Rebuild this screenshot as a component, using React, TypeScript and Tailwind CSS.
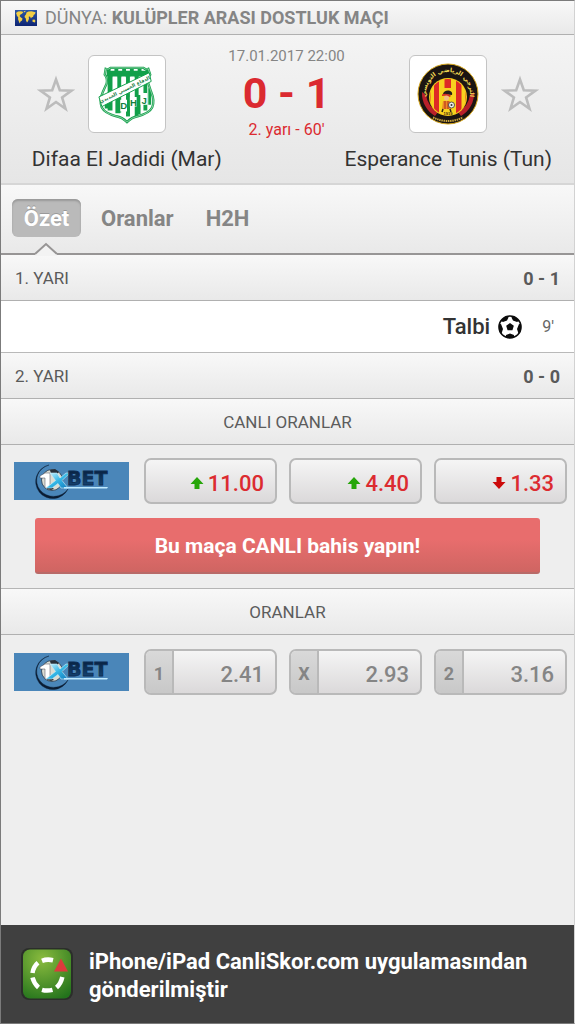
import type { ReactNode } from "react";

const bar = "bg-linear-to-b from-[#f8f8f8] to-[#e9e9e9]";

function WorldFlag() {
  return (
    <svg viewBox="0 0 22 16" className="h-4 w-[22px] shrink-0" aria-hidden="true">
      <defs>
        <linearGradient id="sea" x1="0" y1="0" x2="0" y2="1">
          <stop offset="0" stopColor="#2c57a6" />
          <stop offset="1" stopColor="#0d2473" />
        </linearGradient>
      </defs>
      <rect width="22" height="16" fill="url(#sea)" />
      <path
        fill="#f2cf45"
        d="M1 3l2-1.500 3-.3 2.500.8-1.500 1.800-1.500.7-1 1.500 1.500 1.500 1.500 1-.5 2-1.500 1-.8 2-1-2.500-.7-2 .3-1.500-1.500-2L1.500 4zM8.500 1.200l2.200-.4-.8 1.800zM11 4.500l.5-2 2-1 3-.3 4 1-.5 1.800-1.300 1-.7 2-1.200.3-.8 1.200-1-2-1.300.2.3 2-1 2.500-1 1.300-1-2-.2-2-1.300-1.500.5-1.500zM17.500 9.800l2-.3 1 1.500-.8 1.500-2.200-.7z"
      />
    </svg>
  );
}

function Star() {
  return (
    <svg viewBox="0 0 38 38" className="h-[38px] w-[38px]" aria-hidden="true">
      <path
        d="M19 4.500l3.800 10.800 11.700.3-9.400 6.900 3.400 11.200-9.500-6.700-9.500 6.700 3.400-11.200-9.400-6.900 11.700-.3z"
        fill="none"
        stroke="#bcbcbc"
        strokeWidth="2.600"
      />
    </svg>
  );
}

function JadidiCrest() {
  const shield =
    "M8 5q3 1 5-1h34q2 2 5 1l2 6q-3 3-2 9l3 9q4 9 1 16-3 6-15 9-6 1-11 6-5-5-11-6-12-3-15-9-3-7 1-16l4-9q1-6-2-9z";
  return (
    <svg viewBox="0 0 60 62" className="h-[60px] w-[60px]" role="img" aria-label="Difaa El Jadidi">
      <defs>
        <clipPath id="shield">
          <path d={shield} />
        </clipPath>
      </defs>
      <path d={shield} fill="#fff" />
      <g clipPath="url(#shield)">
        <g fill="#12a04a">
          <path d="M9 5h4v2h4V5h4v2h4V5h4v2h4V5h4v2h4V5h4v2h4V5h4v8H9z" />
          <path d="M10 10h5v38h-5zM20 10h4v40h-4zM29 10h4v44h-4zM38 10h4v44h-4zM47 10h4v38h-4zM7 34h4v12H7z" />
          <path d="M15 15q0-4 2.500-4T20 15v-5h-5zM24 15q0-4 2.500-4T29 15v-5h-5zM33 15q0-4 2.500-4T38 15v-5h-5zM42 15q0-4 2.500-4T47 15v-5h-5z" />
          <path d="M18 35h5v16h-5zM29 38h4v16h-4zM40 32h4v20h-4zM52 25h3v17h-3z" />
        </g>
      </g>
      <path d="M23 37h7v12h-7zM33 34h7v10h-7zM44 30h7v12h-7z" fill="#fff" />
      <g fill="#12803f" fontFamily="'Liberation Sans', sans-serif" fontWeight="700" fontSize="10">
        <text x="23" y="47">D</text>
        <text x="33" y="43">H</text>
        <text x="45" y="41">J</text>
      </g>
      <path d={shield} fill="none" stroke="#12a04a" strokeWidth="2.400" />
      <path d={shield} fill="none" stroke="#d8f0e0" strokeWidth=".6" />
      <path d="M1 34L53 9l2 9L4 44z" fill="#fff" stroke="#12a04a" strokeWidth="1" />
      <text
        x="28"
        y="28"
        transform="rotate(-26 28 27)"
        textAnchor="middle"
        fill="#127a3e"
        fontFamily="'DejaVu Sans', sans-serif"
        fontWeight="700"
        fontSize="5"
      >
        الدفاع الحسني الجديدي
      </text>
    </svg>
  );
}

function EsperanceCrest() {
  return (
    <svg viewBox="0 0 62 62" className="h-[62px] w-[62px]" role="img" aria-label="Esperance Tunis">
      <defs>
        <clipPath id="disc">
          <circle cx="31" cy="34" r="18" />
        </clipPath>
        <path id="arc" d="M10.300 38.500A22 22 0 1 1 51.700 38.500" />
      </defs>
      <circle cx="31" cy="31" r="30" fill="#1b1512" stroke="#d8a81d" strokeWidth="1" />
      <path d="M5 29A26 26 0 0 0 18 53l3-4A23 23 0 0 1 9 32zM57 29A26 26 0 0 1 44 53l-3-4a23 23 0 0 0 12-17z" fill="#b8202a" />
      <circle cx="31" cy="34" r="19" fill="#f6c91c" />
      <g clipPath="url(#disc)">
        <rect x="12" y="14" width="38" height="40" fill="#f7d21f" />
        <path fill="#de2a26" d="M17 14h5v40h-5zM27.500 14h6.500v11h-6.500zM39 14h5.500v40H39zM12 14h1.500v40H12zM48.500 14H50v40h-1.500z" />
      </g>
      <path d="M26 31q1-4 6-3.500 4 1 3 4.500z" fill="#251b19" />
      <path d="M25 31.500q4-2 9 1l-1 1.500q-4-2-8-1z" fill="#d52b27" />
      <circle cx="29.500" cy="35" r="2.500" fill="#f3bc86" />
      <path d="M26 38h7l1 8h-9z" fill="#ec8b24" />
      <path d="M28 38v8M31 38v8" stroke="#b32b20" strokeWidth="1" />
      <path d="M26 46l-1 3M33 46l1 3" stroke="#2b211c" strokeWidth="1.500" />
      <circle cx="34.500" cy="42" r="3" fill="#eee" stroke="#333" strokeWidth=".8" />
      <circle cx="34.500" cy="42" r="1" fill="#333" />
      <text fill="#f3dc55" fontFamily="'DejaVu Sans', sans-serif" fontWeight="700" fontSize="6">
        <textPath href="#arc" startOffset="50%" textAnchor="middle">
          الترجي الرياضي التونسي
        </textPath>
      </text>
      <path d="M16 54.500q15 7 30 0" fill="none" stroke="#c9a53c" strokeWidth="2" strokeDasharray="1.500 .7" />
      <text x="31" y="52" textAnchor="middle" fill="#3a2410" fontFamily="'Liberation Sans', sans-serif" fontWeight="700" fontSize="4">
        1919
      </text>
    </svg>
  );
}

function Ball() {
  return (
    <svg viewBox="0 0 24 24" className="h-6 w-6 shrink-0" role="img" aria-label="Gol">
      <defs>
        <clipPath id="ball">
          <circle cx="12" cy="12" r="11" />
        </clipPath>
      </defs>
      <circle cx="12" cy="12" r="11" fill="#fff" />
      <g clipPath="url(#ball)" fill="#0b0b0b">
        <path d="M12 8l3.800 2.800-1.400 4.500H9.600l-1.400-4.500z" />
        <path d="M4 3l5-2.500 1.500 2L9 5.500 5 7 3 6zM20 3l-5-2.500-1.500 2 1.500 3L19 7l2-1zM0 9.500l3-.5 2 5-1.300 4L0 17zM24 9.500L21 9l-2 5 1.300 4L24 17zM8 20l4-1.500 4 1.500.5 4h-9z" />
      </g>
      <circle cx="12" cy="12" r="11" fill="none" stroke="#0b0b0b" strokeWidth="1.600" />
    </svg>
  );
}

function BookmakerLogo() {
  return (
    <a href="#1xbet" className="block w-[115px] shrink-0 bg-[#4a86b9]">
      <svg viewBox="0 0 115 38" className="block h-[38px] w-[115px]" role="img" aria-label="1XBET">
        <defs>
          <linearGradient id="x" x1="0" y1="0" x2="1" y2="1">
            <stop offset="0" stopColor="#d9f7ff" />
            <stop offset=".5" stopColor="#35b7e6" />
            <stop offset="1" stopColor="#0f77bb" />
          </linearGradient>
          <linearGradient id="bet" x1="0" y1="0" x2="0" y2="1">
            <stop offset="0" stopColor="#061a36" />
            <stop offset="1" stopColor="#174a7c" />
          </linearGradient>
        </defs>
        <path d="M35 3A17 17 0 1 0 54 27 17 16 0 1 1 35 3z" fill="#0a1c33" stroke="#0a1c33" strokeWidth=".4" />
        <circle cx="38" cy="18" r="10.500" fill="#dcdcd2" stroke="#26384d" strokeWidth=".8" />
        <path d="M36 8l5-1 4 3-3 3-5-1zM33 25l4-1 3 3-3 1-4-1z" fill="#26303a" />
        <path d="M26 14l5-3h5v15h-5V16h-5z" fill="#fff" stroke="#445" strokeWidth=".5" />
        <path d="M36 11h7l3 5 6-5h4l-8 7.500 6 7.500h-7l-3-4.500-6 4.500h-6l9.500-7.500z" fill="url(#x)" stroke="#c9f0fb" strokeWidth=".6" />
        <text
          x="53"
          y="23"
          fill="url(#bet)"
          stroke="#0d2d52"
          strokeWidth=".8"
          fontFamily="'DejaVu Sans', sans-serif"
          fontWeight="700"
          fontSize="19"
        >
          BET
        </text>
        <path d="M50 25h44l-1 1.500H50z" fill="#bfeaff" />
      </svg>
    </a>
  );
}

function Arrow({ down = false }: { down?: boolean }) {
  return (
    <svg viewBox="0 0 14 14" className="h-3.5 w-3.5 shrink-0" role="img" aria-label={down ? "Düştü" : "Yükseldi"}>
      {down ? (
        <path d="M4.500 1h5v5H13.500L7 13 .5 6h4z" fill="#cc0a0a" />
      ) : (
        <path d="M4.500 13h5V8h4L7 1 .5 8h4z" fill="#27a60a" />
      )}
    </svg>
  );
}

function HalfRow({ title, score }: { title: string; score: string }) {
  return (
    <div className={`flex h-[46px] items-center justify-between border-b border-[#b0b0b0] px-3.5 pt-0.5 text-[17px] text-[#5a5a5a] ${bar}`}>
      <h2>{title}</h2>
      <span className="text-lg font-bold">{score}</span>
    </div>
  );
}

function SectionTitle({ children }: { children: ReactNode }) {
  return (
    <h2 className={`flex h-[46px] items-center justify-center border-b border-[#b0b0b0] pt-0.5 text-[17px] text-[#5c5c5c] ${bar}`}>
      {children}
    </h2>
  );
}

const oddButton =
  "flex h-[46px] items-stretch overflow-hidden rounded-[7px] border-2 border-[#b9b9b9] bg-linear-to-b from-[#f5f5f5] to-[#dbd9da]";

const oddsRow = "flex items-center gap-[15px] pr-[7px] pl-[13px]";

export default function App() {
  return (
    <div className="flex min-h-screen flex-col border border-[#7b7b7b] border-r-[#d2d2d2] bg-[#eeeeee] font-['Roboto',sans-serif]">
      <header className={`flex h-[34px] items-center gap-2 border-b border-[#b0b0b0] px-3.5 text-lg text-[#858585] ${bar}`}>
        <WorldFlag />
        <h1 className="whitespace-nowrap">
          DÜNYA: <span className="font-bold">KULÜPLER ARASI DOSTLUK MAÇI</span>
        </h1>
      </header>

      <section className="grid h-[150px] grid-cols-[1fr_116px_1fr] border-b-2 border-[#d6d6d6] bg-linear-to-b from-[#f4f4f4] to-[#e6e6e6] pr-[22px] pl-6">
        <div className="flex flex-col items-center pt-5">
          <div className="grid w-full grid-cols-[1fr_78px_1fr] items-center justify-items-center">
            <button type="button" aria-label="Difaa El Jadidi favorilere ekle">
              <Star />
            </button>
            <div className="flex h-[78px] w-[78px] items-center justify-center rounded-md border border-[#c4c4c4] bg-white">
              <JadidiCrest />
            </div>
          </div>
          <p className="mt-3 text-[21px] leading-7 whitespace-nowrap text-[#333]">Difaa El Jadidi (Mar)</p>
        </div>
        <div className="flex flex-col items-center pt-[11px] whitespace-nowrap">
          <time className="text-[15px] leading-5 text-[#858585]">17.01.2017 22:00</time>
          <strong className="text-[43px] leading-[54px] font-bold text-[#db2a30]">0 - 1</strong>
          <span className="text-base leading-5 text-[#db2a30]">2. yarı - 60'</span>
        </div>
        <div className="flex flex-col items-center pt-5">
          <div className="grid w-full grid-cols-[1fr_78px_1fr] items-center justify-items-center">
            <div className="col-start-2 flex h-[78px] w-[78px] items-center justify-center rounded-md border border-[#c4c4c4] bg-white">
              <EsperanceCrest />
            </div>
            <button type="button" aria-label="Esperance Tunis favorilere ekle">
              <Star />
            </button>
          </div>
          <p className="mt-3 text-[21px] leading-7 whitespace-nowrap text-[#333]">Esperance Tunis (Tun)</p>
        </div>
      </section>

      <nav className={`flex h-[70px] items-start border-b-2 border-[#979595] px-[11px] pt-3.5 text-[22px] leading-10 font-bold text-[#858585] ${bar}`}>
        <a
          href="#ozet"
          aria-current="page"
          className="relative h-[38px] w-[69px] rounded-md bg-[#bababa] text-center text-white shadow-[inset_0_2px_2px_#999] [text-shadow:0_-1px_0_#999]"
        >
          Özet
          <svg viewBox="0 0 24 14" className="absolute top-[43px] left-[22px] h-3.5 w-6" aria-hidden="true">
            <path d="M1 12L12 2l11 10v2H1z" fill="#f3f3f3" />
            <path d="M1 12L12 2l11 10" fill="none" stroke="#979595" strokeWidth="2" />
          </svg>
        </a>
        <a href="#oranlar" className="ml-5">Oranlar</a>
        <a href="#h2h" className="ml-8">H2H</a>
      </nav>

      <HalfRow title="1. YARI" score="0 - 1" />
      <div className="flex h-[52px] items-center justify-end border-b border-[#b9b9b9] bg-white pr-5">
        <span className="mr-2 text-[22px] font-medium text-[#333]">Talbi</span>
        <Ball />
        <span className="ml-5 text-base text-[#666]">9'</span>
      </div>
      <HalfRow title="2. YARI" score="0 - 0" />

      <SectionTitle>CANLI ORANLAR</SectionTitle>
      <div className="border-b border-[#b5b5b5] pt-[13px] pb-3.5">
        <div className={oddsRow}>
          <BookmakerLogo />
          <div className="grid flex-1 grid-cols-3 gap-3">
            {[
              { odd: "11.00", down: false },
              { odd: "4.40", down: false },
              { odd: "1.33", down: true },
            ].map(({ odd, down }) => (
              <button key={odd} type="button" className={oddButton}>
                <span className="flex flex-1 items-center justify-end gap-1 pt-1 pr-[11px] text-[22px] font-medium text-[#dc2b30]">
                  <Arrow down={down} />
                  {odd}
                </span>
              </button>
            ))}
          </div>
        </div>
        <div className="mt-3.5 px-[34px]">
          <button
            type="button"
            className="h-14 w-full rounded-[3px] border-b-2 border-[#b86a68] bg-linear-to-b from-[#e86d6d] from-40% to-[#cf6562] pt-1 text-[21px] font-bold text-white"
          >
            Bu maça CANLI bahis yapın!
          </button>
        </div>
      </div>

      <SectionTitle>ORANLAR</SectionTitle>
      <div className="flex-1 pt-3.5">
        <div className={oddsRow}>
          <BookmakerLogo />
          <div className="grid flex-1 grid-cols-3 gap-3">
            {[
              { pick: "1", odd: "2.41" },
              { pick: "X", odd: "2.93" },
              { pick: "2", odd: "3.16" },
            ].map(({ pick, odd }) => (
              <button key={pick} type="button" className={oddButton}>
                <span className="flex w-7 items-center justify-center border-r-2 border-[#b9b9b9] bg-linear-to-b from-[#d9d9d9] to-[#c8c8c8] pt-1 text-lg font-bold text-[#858585]">
                  {pick}
                </span>
                <span className="flex flex-1 items-center justify-end pt-1 pr-[11px] text-[22px] font-medium text-[#858585]">{odd}</span>
              </button>
            ))}
          </div>
        </div>
      </div>

      <footer className="flex h-[98px] items-center gap-4 bg-[#404040] px-5">
        <svg viewBox="0 0 52 52" className="h-[52px] w-[52px] shrink-0" role="img" aria-label="CanliSkor">
          <defs>
            <radialGradient id="grass" cx=".4" cy=".2" r=".9">
              <stop offset="0" stopColor="#8abb3e" />
              <stop offset="1" stopColor="#23731c" />
            </radialGradient>
          </defs>
          <rect width="52" height="52" rx="8" fill="#2b2e2a" />
          <rect x="2" y="1.500" width="48" height="49" rx="7" fill="url(#grass)" />
          <g fill="none" stroke="#fff" strokeWidth="4.500">
            <path d="M21 12.800Q26 10.800 32 12.200" />
            <path d="M17 14.800Q12.500 18.500 11.500 25" />
            <path d="M11.500 29.500Q13 35.500 17.500 39.500" />
            <path d="M21 41.800Q26 43.300 31.500 41.800" />
            <path d="M35.500 39.500Q40 35.500 41.300 29" />
          </g>
          <path d="M40 10.500l7 13H33z" fill="#dc3b3c" />
        </svg>
        <p className="pt-1 text-[22px] leading-7 font-bold text-white">iPhone/iPad CanliSkor.com uygulamasından gönderilmiştir</p>
      </footer>
    </div>
  );
}
